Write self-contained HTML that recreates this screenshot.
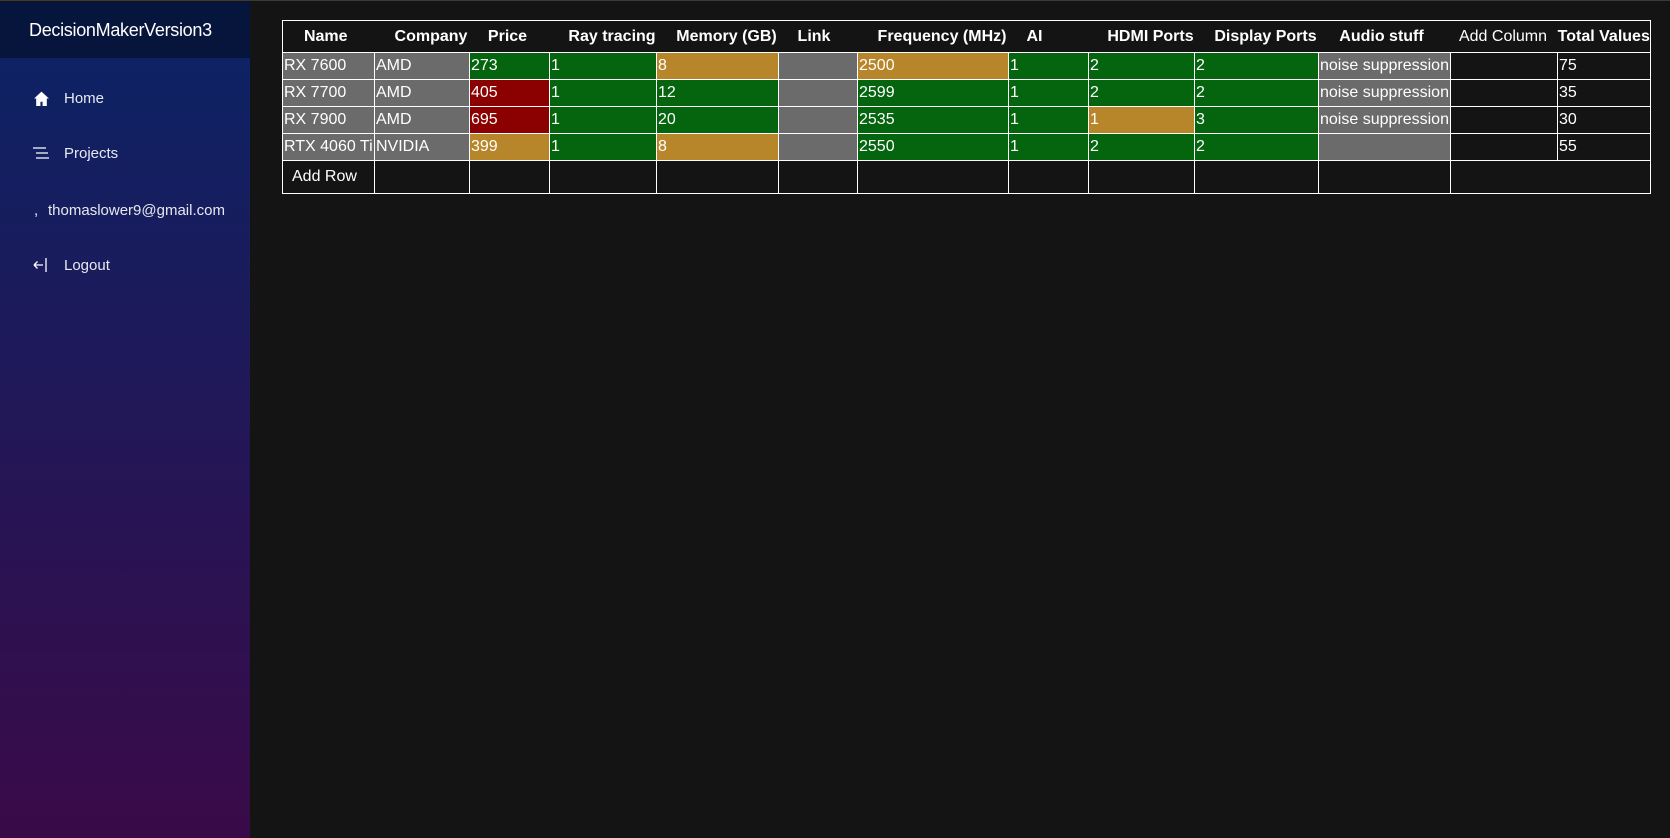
<!DOCTYPE html>
<html><head><meta charset="utf-8"><style>
*{box-sizing:border-box;margin:0;padding:0}
body{width:1670px;height:837px;background:#141414;font-family:"Liberation Sans",Arial,sans-serif;color:#fff;overflow:hidden;position:relative;border-top:1px solid #3a3a3a}
.side{position:absolute;left:0;top:1px;width:250px;height:836px;background:linear-gradient(180deg,#0a2466 0%,#3a0a48 100%)}
.brand{height:56px;background:rgba(0,0,0,0.4);font-size:18px;padding:18px 0 0 29px;letter-spacing:-0.3px}
.nav{position:absolute;left:40px;font-size:15px;color:#e8e8f0}
.nav span{position:absolute;left:24px;top:0;white-space:nowrap}
table{position:absolute;left:282px;top:19px;border-collapse:collapse;table-layout:fixed;border:1px solid #fff;font-size:16px}
th{height:32px;font-weight:bold;text-align:center;white-space:nowrap;overflow:visible;padding:0}
th i{font-style:normal;position:relative}
td{height:27px;border:1px solid #fff;white-space:nowrap;overflow:hidden;padding:0 0 0 1px;vertical-align:middle}
tr.add td{height:33px}
.g{background:#6b6b6b}.v{background:#05650f}.r{background:#8b0000}.o{background:#b8862a}
</style></head><body>
<div class="side">
<div class="brand">DecisionMakerVersion3</div>
<div class="nav" style="top:88px"><svg width="17" height="17" viewBox="0 0 16 16" style="position:absolute;left:-7px;top:0"><path d="M8 1.5L1 8h2v7h4v-4h2v4h4V8h2z" fill="#fff"/></svg><span>Home</span></div>
<div class="nav" style="top:143px"><svg width="18" height="14" viewBox="0 0 18 14" style="position:absolute;left:-7px;top:2px"><path d="M0 1h13M3 6h12M3 11h13" stroke="#fff" stroke-width="1.3"/></svg><span>Projects</span></div>
<div class="nav" style="top:200px"><span style="left:-6px">,</span><span style="left:8px">thomaslower9@gmail.com</span></div>
<div class="nav" style="top:255px"><svg width="18" height="16" viewBox="0 0 18 16" style="position:absolute;left:-7px;top:0"><path d="M1 8h9M1 8l3.5-3.5M1 8l3.5 3.5M13 1v14" stroke="#fff" stroke-width="1.3" fill="none"/></svg><span>Logout</span></div>
</div>
<table>
<colgroup><col style="width:92px"><col style="width:95px"><col style="width:80px"><col style="width:107px"><col style="width:122px"><col style="width:79px"><col style="width:151px"><col style="width:80px"><col style="width:106px"><col style="width:124px"><col style="width:132px"><col style="width:107px"><col style="width:93px"></colgroup>
<tr><th><i style="left:-3px">Name</i></th><th><i style="left:9px">Company</i></th><th><i style="left:-2px">Price</i></th><th><i style="left:9px">Ray tracing</i></th><th><i style="left:9px">Memory (GB)</i></th><th><i style="left:-4px">Link</i></th><th><i style="left:9px">Frequency (MHz)</i></th><th><i style="left:-14px">AI</i></th><th><i style="left:9px">HDMI Ports</i></th><th><i style="left:9px">Display Ports</i></th><th><i style="left:-3px">Audio stuff</i></th><th style="font-weight:normal"><i style="left:-1px">Add Column</i></th><th>Total Values</th></tr>
<tr><td class="g">RX 7600</td><td class="g">AMD</td><td class="v">273</td><td class="v">1</td><td class="o">8</td><td class="g"></td><td class="o">2500</td><td class="v">1</td><td class="v">2</td><td class="v">2</td><td class="g">noise suppression</td><td></td><td>75</td></tr>
<tr><td class="g">RX 7700</td><td class="g">AMD</td><td class="r">405</td><td class="v">1</td><td class="v">12</td><td class="g"></td><td class="v">2599</td><td class="v">1</td><td class="v">2</td><td class="v">2</td><td class="g">noise suppression</td><td></td><td>35</td></tr>
<tr><td class="g">RX 7900</td><td class="g">AMD</td><td class="r">695</td><td class="v">1</td><td class="v">20</td><td class="g"></td><td class="v">2535</td><td class="v">1</td><td class="o">1</td><td class="v">3</td><td class="g">noise suppression</td><td></td><td>30</td></tr>
<tr><td class="g">RTX 4060 Ti</td><td class="g">NVIDIA</td><td class="o">399</td><td class="v">1</td><td class="o">8</td><td class="g"></td><td class="v">2550</td><td class="v">1</td><td class="v">2</td><td class="v">2</td><td class="g"></td><td></td><td>55</td></tr>
<tr class="add"><td style="padding-left:9px">Add Row</td><td></td><td></td><td></td><td></td><td></td><td></td><td></td><td></td><td></td><td></td><td colspan="2"></td></tr>
</table>
</body></html>
